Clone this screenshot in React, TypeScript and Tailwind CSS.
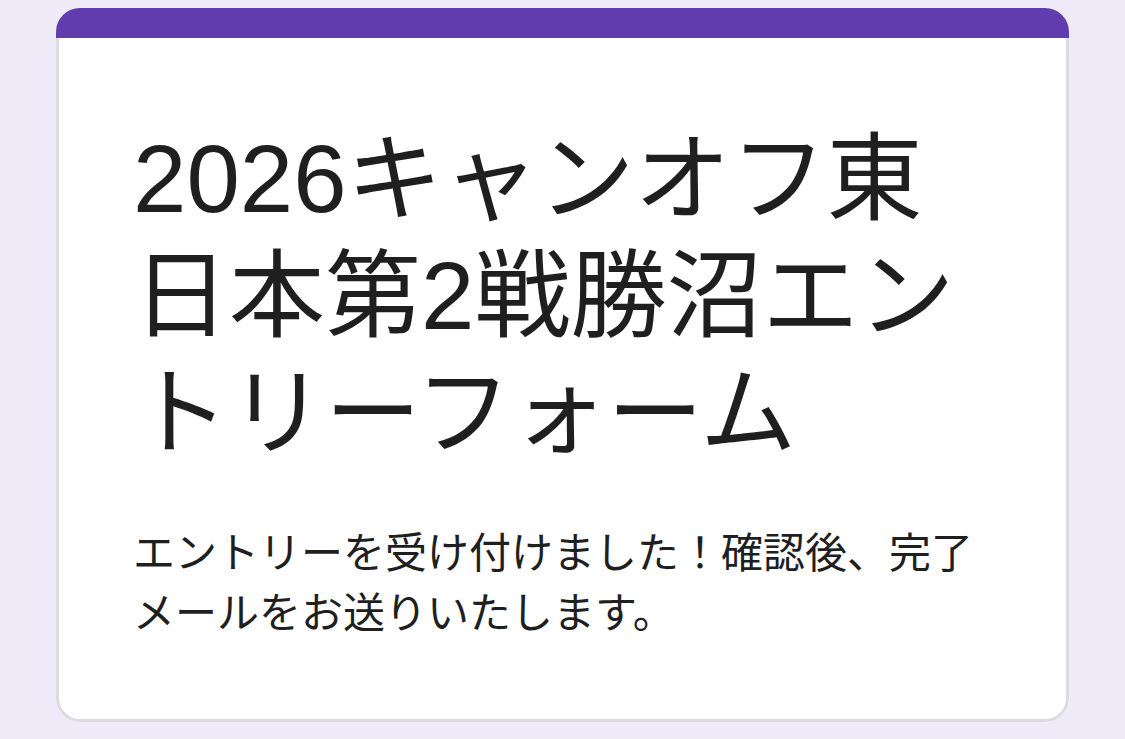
import React from "react";

const font = {
  fontFamily: '"Liberation Sans", "Noto Sans CJK JP", sans-serif',
};

const App: React.FC = () => {
  return (
    <div className="min-h-screen bg-[#efeaf7] px-[56px] pt-[8px] pb-[19px]" style={font}>
      <div className="rounded-[24px] overflow-hidden">
        <div className="h-[30px] bg-[#613cae]" />
        <div className="bg-white border-x-[3px] border-b-[3px] border-[#dadce0] rounded-b-[24px] pl-[74px] pr-[74px] pt-[82px] pb-[75px]">
          <h1 className="text-[96px] leading-[117px] font-normal text-[#1f1f1f] tracking-normal">
            2026キャンオフ東日本第2戦勝沼エントリーフォーム
          </h1>
          <p className="mt-[53px] text-[42px] leading-[60px] text-[#1f1f1f]">
            エントリーを受け付けました！確認後、完了メールをお送りいたします。
          </p>
        </div>
      </div>
    </div>
  );
};

export default App;
